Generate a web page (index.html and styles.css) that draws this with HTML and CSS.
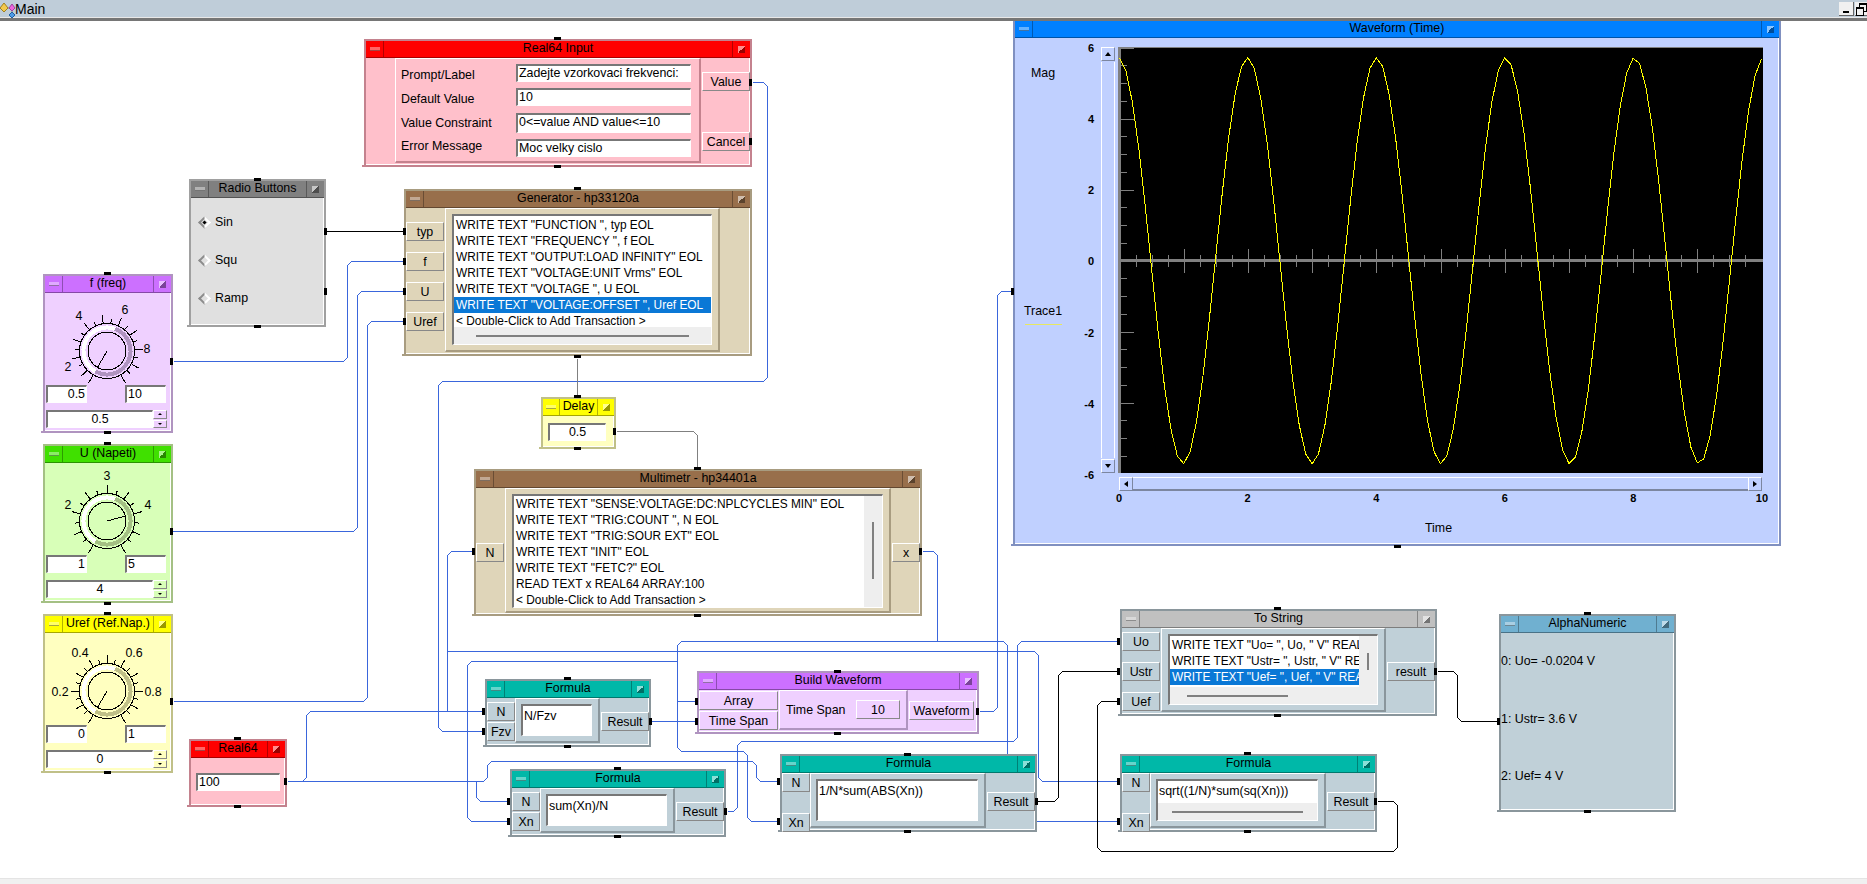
FILE: index.html
```html
<!DOCTYPE html>
<html lang="en">
<head>
    <meta charset="UTF-8">
    <meta name="viewport" content="width=device-width, initial-scale=1.0">
    <title>Main</title>
    <link rel="stylesheet" href="styles.css">
</head>
<body>
    <header class="main-bar">
        <svg class="main-icon" width="16" height="18" viewBox="0 0 16 18">
            <path d="M4 7 L12 7 L12 14" class="main-icon-line"/>
            <polygon points="4,2 8,7 4,11 0,7" fill="#f2c94c" stroke="#a08020"/>
            <polygon points="12,3 15,7 12,10 9,7" fill="#ee66dd" stroke="#a040a0"/>
            <polygon points="12,11 15,14 12,17 9,14" fill="#4d9be8" stroke="#2060a0"/>
        </svg>
        <span class="main-name">Main</span>
        <div class="win-controls">
            <span class="win-btn win-min"></span>
            <span class="win-btn win-restore"></span>
        </div>
    </header>

    <main class="canvas">
        <svg id="wires" class="layer" viewBox="0 21 1867 857"></svg>

        <!-- Real64 Input -->
        <div class="node red n-input">
            <div class="title"><span class="tb tb-min"></span><span class="title-text">Real64 Input</span><span class="tb tb-max"></span></div>
            <div class="body">
                <div class="inputs"></div>
                <div class="inner form">
                    <span class="lab-low">Prompt/Label</span><span class="field">Zadejte vzorkovaci frekvenci:</span>
                    <span class="lab-low">Default Value</span><span class="field">10</span>
                    <span class="lab-mid">Value Constraint</span><span class="field">0&lt;=value AND value&lt;=10</span>
                    <span class="lab-high">Error Message</span><span class="field">Moc velky cislo</span>
                </div>
                <div class="outputs">
                    <span class="term">Value</span>
                    <span class="term">Cancel</span>
                </div>
            </div>
        </div>

        <!-- Radio Buttons -->
        <div class="node gray n-radio">
            <div class="title"><span class="tb tb-min"></span><span class="title-text">Radio Buttons</span><span class="tb tb-max"></span></div>
            <div class="body radio-list">
                <div class="radio-row"><span class="radio radio-on"></span>Sin</div>
                <div class="radio-row"><span class="radio"></span>Squ</div>
                <div class="radio-row"><span class="radio"></span>Ramp</div>
            </div>
        </div>

        <!-- Generator -->
        <div class="node brown n-generator">
            <div class="title"><span class="tb tb-min"></span><span class="title-text">Generator - hp33120a</span><span class="tb tb-max"></span></div>
            <div class="body">
                <div class="inputs">
                    <span class="term">typ</span>
                    <span class="term">f</span>
                    <span class="term">U</span>
                    <span class="term">Uref</span>
                </div>
                <div class="inner">
                    <div class="list">
                        <div class="list-main">
                            <div class="rows">
                                <div class="row">WRITE TEXT "FUNCTION ", typ EOL</div>
                                <div class="row">WRITE TEXT "FREQUENCY ", f EOL</div>
                                <div class="row">WRITE TEXT "OUTPUT:LOAD INFINITY" EOL</div>
                                <div class="row">WRITE TEXT "VOLTAGE:UNIT Vrms" EOL</div>
                                <div class="row">WRITE TEXT "VOLTAGE ", U EOL</div>
                                <div class="row selected">WRITE TEXT "VOLTAGE:OFFSET ", Uref EOL</div>
                                <div class="row">&lt; Double-Click to Add Transaction &gt;</div>
                            </div>
                        </div>
                        <div class="hscroll"><span class="hthumb"></span></div>
                    </div>
                </div>
                <div class="outputs"></div>
            </div>
        </div>

        <!-- Knobs -->
        <div class="node purple n-knob n-freq">
            <div class="title"><span class="tb tb-min"></span><span class="title-text">f (freq)</span><span class="tb tb-max"></span></div>
            <div class="body knob-body">
                <svg class="knob" viewBox="0 0 124 90" data-lo="0.5" data-hi="10" data-val="0.5" data-major="2" data-mid="1">
                    <text x="34" y="23">4</text>
                    <text x="80" y="17">6</text>
                    <text x="102" y="56">8</text>
                    <text x="23" y="74">2</text>
                </svg>
                <div class="knob-range"><span class="field num-right">0.5</span><span class="field">10</span></div>
                <div class="knob-value"><span class="field num-center">0.5</span><span class="spin"><i class="spin-up"></i><i class="spin-down"></i></span></div>
            </div>
        </div>

        <div class="node green n-knob n-napeti">
            <div class="title"><span class="tb tb-min"></span><span class="title-text">U (Napeti)</span><span class="tb tb-max"></span></div>
            <div class="body knob-body">
                <svg class="knob" viewBox="0 0 124 90" data-lo="1" data-hi="5" data-val="4" data-major="1" data-mid="0.5">
                    <text x="62" y="13">3</text>
                    <text x="23" y="42">2</text>
                    <text x="103" y="42">4</text>
                </svg>
                <div class="knob-range"><span class="field num-right">1</span><span class="field">5</span></div>
                <div class="knob-value"><span class="field num-center">4</span><span class="spin"><i class="spin-up"></i><i class="spin-down"></i></span></div>
            </div>
        </div>

        <div class="node yellow n-knob n-uref">
            <div class="title"><span class="tb tb-min"></span><span class="title-text">Uref (Ref.Nap.)</span><span class="tb tb-max"></span></div>
            <div class="body knob-body">
                <svg class="knob" viewBox="0 0 124 90" data-lo="0" data-hi="1" data-val="0" data-major="0.2" data-mid="0.1">
                    <text x="35" y="20">0.4</text>
                    <text x="89" y="20">0.6</text>
                    <text x="15" y="59">0.2</text>
                    <text x="108" y="59">0.8</text>
                </svg>
                <div class="knob-range"><span class="field num-right">0</span><span class="field">1</span></div>
                <div class="knob-value"><span class="field num-center">0</span><span class="spin"><i class="spin-up"></i><i class="spin-down"></i></span></div>
            </div>
        </div>

        <!-- Real64 constant -->
        <div class="node red n-real64">
            <div class="title"><span class="tb tb-min"></span><span class="title-text">Real64</span><span class="tb tb-max"></span></div>
            <div class="body const-body"><span class="field">100</span></div>
        </div>

        <!-- Delay -->
        <div class="node yellow n-delay">
            <div class="title"><span class="tb tb-min"></span><span class="title-text">Delay</span><span class="tb tb-max"></span></div>
            <div class="body const-body"><span class="field num-center">0.5</span></div>
        </div>

        <!-- Multimetr -->
        <div class="node brown n-multimetr">
            <div class="title"><span class="tb tb-min"></span><span class="title-text">Multimetr - hp34401a</span><span class="tb tb-max"></span></div>
            <div class="body">
                <div class="inputs"><span class="term">N</span></div>
                <div class="inner">
                    <div class="list">
                        <div class="list-main">
                            <div class="rows">
                                <div class="row">WRITE TEXT "SENSE:VOLTAGE:DC:NPLCYCLES MIN" EOL</div>
                                <div class="row">WRITE TEXT "TRIG:COUNT ", N EOL</div>
                                <div class="row">WRITE TEXT "TRIG:SOUR EXT" EOL</div>
                                <div class="row">WRITE TEXT "INIT" EOL</div>
                                <div class="row">WRITE TEXT "FETC?" EOL</div>
                                <div class="row">READ TEXT x REAL64 ARRAY:100</div>
                                <div class="row">&lt; Double-Click to Add Transaction &gt;</div>
                            </div>
                            <div class="vscroll"><span class="vthumb"></span></div>
                        </div>
                    </div>
                </div>
                <div class="outputs"><span class="term">x</span></div>
            </div>
        </div>

        <!-- Formula boxes -->
        <div class="node teal n-formula n-f1">
            <div class="title"><span class="tb tb-min"></span><span class="title-text">Formula</span><span class="tb tb-max"></span></div>
            <div class="body">
                <div class="inputs"><span class="term">N</span><span class="term">Fzv</span></div>
                <div class="inner"><div class="list formula-box">N/Fzv</div></div>
                <div class="outputs"><span class="term">Result</span></div>
            </div>
        </div>

        <div class="node teal n-formula n-f2">
            <div class="title"><span class="tb tb-min"></span><span class="title-text">Formula</span><span class="tb tb-max"></span></div>
            <div class="body">
                <div class="inputs"><span class="term">N</span><span class="term">Xn</span></div>
                <div class="inner"><div class="list formula-box">sum(Xn)/N</div></div>
                <div class="outputs"><span class="term">Result</span></div>
            </div>
        </div>

        <div class="node teal n-formula n-f3">
            <div class="title"><span class="tb tb-min"></span><span class="title-text">Formula</span><span class="tb tb-max"></span></div>
            <div class="body">
                <div class="inputs"><span class="term">N</span><span class="term">Xn</span></div>
                <div class="inner"><div class="list formula-box">1/N*sum(ABS(Xn))</div></div>
                <div class="outputs"><span class="term">Result</span></div>
            </div>
        </div>

        <div class="node teal n-formula n-f4">
            <div class="title"><span class="tb tb-min"></span><span class="title-text">Formula</span><span class="tb tb-max"></span></div>
            <div class="body">
                <div class="inputs"><span class="term">N</span><span class="term">Xn</span></div>
                <div class="inner">
                    <div class="list">
                        <div class="list-main formula-box">sqrt((1/N)*sum(sq(Xn)))</div>
                        <div class="hscroll"><span class="hthumb"></span></div>
                    </div>
                </div>
                <div class="outputs"><span class="term">Result</span></div>
            </div>
        </div>

        <!-- Build Waveform -->
        <div class="node purple n-build">
            <div class="title"><span class="tb tb-min"></span><span class="title-text">Build Waveform</span><span class="tb tb-max"></span></div>
            <div class="body">
                <div class="inputs"><span class="term">Array</span><span class="term">Time Span</span></div>
                <div class="inner span-row"><span>Time Span</span><span class="term">10</span></div>
                <div class="outputs"><span class="term">Waveform</span></div>
            </div>
        </div>

        <!-- To String -->
        <div class="node silver n-tostring">
            <div class="title"><span class="tb tb-min"></span><span class="title-text">To String</span><span class="tb tb-max"></span></div>
            <div class="body">
                <div class="inputs"><span class="term">Uo</span><span class="term">Ustr</span><span class="term">Uef</span></div>
                <div class="inner">
                    <div class="list">
                        <div class="list-main">
                            <div class="rows">
                                <div class="row">WRITE TEXT "Uo= ", Uo, " V" REAL64 FORMAT EOL</div>
                                <div class="row">WRITE TEXT "Ustr= ", Ustr, " V" REAL64 FORMAT EOL</div>
                                <div class="row selected">WRITE TEXT "Uef= ", Uef, " V" REAL64 FORMAT EOL</div>
                                <div class="row">&lt; Double-Click to Add Transaction &gt;</div>
                            </div>
                            <div class="vscroll"><span class="vthumb"></span></div>
                        </div>
                        <div class="hscroll"><span class="hthumb"></span></div>
                    </div>
                </div>
                <div class="outputs"><span class="term">result</span></div>
            </div>
        </div>

        <!-- AlphaNumeric -->
        <div class="node sky n-alpha">
            <div class="title"><span class="tb tb-min"></span><span class="title-text">AlphaNumeric</span><span class="tb tb-max"></span></div>
            <div class="body alpha-body">
                <div>0: Uo= -0.0204 V</div>
                <div>1: Ustr= 3.6 V</div>
                <div>2: Uef= 4 V</div>
            </div>
        </div>

        <!-- Waveform display -->
        <div class="node blue n-wave">
            <div class="title"><span class="tb tb-min"></span><span class="title-text">Waveform (Time)</span><span class="tb tb-max"></span></div>
            <div class="body wave-grid">
                <div class="legend">
                    <span class="legend-mag">Mag</span>
                    <span class="legend-trace">Trace1</span>
                    <span class="legend-line"></span>
                </div>
                <div class="y-labels">
                    <span>6</span><span>4</span><span>2</span><span>0</span><span>-2</span><span>-4</span><span>-6</span>
                </div>
                <div class="vslider">
                    <span class="slide-btn"><i class="arrow-up"></i></span>
                    <span class="vslider-track"></span>
                    <span class="slide-btn"><i class="arrow-down"></i></span>
                </div>
                <svg id="plot" class="plot" viewBox="1118 47 645 426"></svg>
                <div class="hslider">
                    <span class="slide-btn"><i class="arrow-left"></i></span>
                    <span class="hslider-track"></span>
                    <span class="slide-btn"><i class="arrow-right"></i></span>
                </div>
                <div class="x-labels">
                    <span>0</span><span>2</span><span>4</span><span>6</span><span>8</span><span>10</span>
                </div>
                <div class="x-name">Time</div>
            </div>
        </div>

        <svg id="pins" class="layer" viewBox="0 21 1867 857"></svg>
    </main>

    <footer class="status"></footer>

    <script src="script.js"></script>
</body>
</html>
```

FILE: styles.css
```css
/* Global Styles */
* {
    margin: 0;
    padding: 0;
    box-sizing: border-box;
}

body {
    width: 1867px;
    height: 884px;
    display: flex;
    flex-direction: column;
    overflow: hidden;
    background: #fff;
    color: #000;
    font-family: 'Liberation Sans', Arial, sans-serif;
    font-size: 12.4px;
}

/* Window bar */
.main-bar {
    height: 21px;
    flex: none;
    display: flex;
    align-items: flex-start;
    background: #bfcdd9;
    border-bottom: 3px solid #767676;
    box-shadow: inset 0 -1px 0 #e8e8e8;
    position: relative;
    z-index: 2;
}

.main-icon {
    flex: none;
    margin-top: 1px;
}

.main-icon-line {
    fill: none;
    stroke: #888;
}

.main-name {
    font-size: 14px;
    line-height: 18px;
    margin-left: -1px;
}

.win-controls {
    margin-left: auto;
    display: flex;
    gap: 1px;
    padding-top: 2px;
}

.win-btn {
    display: block;
    height: 14px;
    background: #f0f0f0;
    border-right: 1px solid #666;
    border-bottom: 1px solid #666;
    position: relative;
}

.win-min {
    width: 15px;
}

.win-min::after {
    content: '';
    position: absolute;
    left: 4px;
    bottom: 2px;
    width: 6px;
    height: 2px;
    background: #000;
}

.win-restore {
    width: 12px;
    border-right: none;
}

.win-restore::before,
.win-restore::after {
    content: '';
    position: absolute;
    width: 6px;
    height: 6px;
    border: 1px solid #000;
    border-top-width: 2px;
}

.win-restore::before {
    left: 4px;
    top: 1px;
}

.win-restore::after {
    left: 1px;
    top: 5px;
    background: #f0f0f0;
}

/* Canvas */
.canvas {
    flex: 1;
    position: relative;
    overflow: hidden;
}

.layer {
    position: absolute;
    left: 0;
    top: 0;
    width: 1867px;
    height: 857px;
    shape-rendering: crispEdges;
}

#pins {
    pointer-events: none;
}

.status {
    height: 6px;
    flex: none;
    background: #f0f0f0;
    border-top: 1px solid #e4e4e4;
}

/* Wires */
.wire {
    fill: none;
    stroke: #3a66dc;
    stroke-width: 1;
}

.wire-black {
    stroke: #000;
}

.wire-gray {
    stroke: #808080;
}

.pin {
    fill: #000;
}

/* Node colours */
.red    { --title: #ff0000; --fill: #ffc0cb; --edge: #c4828e; }
.gray   { --title: #808080; --fill: #e0e0e0; --edge: #a0a0a0; }
.brown  { --title: #986f4b; --fill: #dfd5b9; --edge: #a89c80; }
.purple { --title: #cc70ff; --fill: #efd0ff; --edge: #b094c0; }
.green  { --title: #40e000; --fill: #d8ffb8; --edge: #a4c084; }
.yellow { --title: #ffff00; --fill: #ffffc0; --edge: #c0c088; }
.teal   { --title: #00b8a8; --fill: #c0d0d8; --edge: #8a969c; }
.silver { --title: #c0c0c0; --fill: #c0d0d8; --edge: #8a969c; }
.sky    { --title: #70b0d0; --fill: #c0d0d8; --edge: #8a969c; }
.blue   { --title: #0080ff; --fill: #c0d0ff; --edge: #8090c0; }

/* Node shell */
.node {
    position: absolute;
    display: flex;
    flex-direction: column;
    background: var(--fill);
    border: 2px solid var(--edge);
    box-shadow: inset -1px -1px 0 #fff;
}

/* the little bevel tail in the lower left corner */
.node::after {
    content: '';
    position: absolute;
    left: -4px;
    bottom: -2px;
    width: 2px;
    height: 2px;
    background: var(--edge);
}

.title {
    height: 17px;
    flex: none;
    display: flex;
    background: var(--title);
    border-bottom: 1px solid rgba(0, 0, 0, 0.35);
}

.title-text {
    flex: 1;
    min-width: 0;
    text-align: center;
    line-height: 15px;
    white-space: nowrap;
    overflow: hidden;
}

.tb {
    flex: none;
    width: 18px;
    display: flex;
    align-items: center;
    justify-content: center;
}

.tb-min {
    border-right: 1px solid rgba(0, 0, 0, 0.3);
}

.tb-max {
    border-left: 1px solid rgba(0, 0, 0, 0.3);
}

.tb-min::before {
    content: '';
    width: 10px;
    height: 3px;
    background: rgba(255, 255, 255, 0.4);
    border-bottom: 1px solid rgba(0, 0, 0, 0.35);
}

.tb-max::before {
    content: '';
    width: 7px;
    height: 7px;
    background: linear-gradient(135deg, rgba(255, 255, 255, 0.55) 50%, rgba(0, 0, 0, 0.4) 50%);
}

.body {
    flex: 1;
    min-height: 0;
    display: flex;
}

.inputs,
.outputs {
    flex: none;
    display: flex;
    flex-direction: column;
}

.outputs {
    padding-left: 1px;
}

.inner {
    flex: 1;
    min-width: 0;
    display: flex;
    flex-direction: column;
    padding: 5px 6px;
    margin-left: 1px;
    margin-bottom: 2px;
    border: 1px solid;
    border-color: #fff var(--edge) var(--edge) #fff;
    border-right-width: 2px;
    border-bottom-width: 2px;
}

.term {
    display: block;
    height: 19px;
    line-height: 18px;
    text-align: center;
    white-space: nowrap;
    background: var(--fill);
    border: 1px solid;
    border-color: #fff #888 #888 #fff;
}

.field {
    display: block;
    height: 18px;
    line-height: 14px;
    padding: 0 1px;
    background: #fff;
    border: 1px solid #fff;
    border-top: 2px solid #777;
    border-left: 2px solid #777;
    white-space: nowrap;
    overflow: hidden;
}

.num-right {
    text-align: right;
}

.num-center {
    text-align: center;
}

/* Transaction lists */
.list {
    flex: 1;
    min-height: 0;
    display: flex;
    flex-direction: column;
    background: #fff;
    border: 1px solid #fff;
    border-top: 2px solid #777;
    border-left: 2px solid #777;
    overflow: hidden;
}

.list-main {
    flex: 1;
    min-height: 0;
    display: flex;
    overflow: hidden;
}

.rows {
    flex: 1;
    min-width: 0;
    overflow: hidden;
    padding-top: 1px;
    font-size: 11.9px;
}

.row {
    height: 16px;
    line-height: 16px;
    padding-left: 2px;
    white-space: nowrap;
    overflow: hidden;
}

.selected {
    background: #0a78d6;
    color: #fff;
}

.hscroll {
    height: 17px;
    flex: none;
    display: flex;
    align-items: center;
    justify-content: center;
    background: #eee;
}

.hthumb {
    display: block;
    width: 83%;
    height: 2px;
    background: #808080;
}

.vscroll {
    flex: none;
    width: 18px;
    display: flex;
    justify-content: center;
    background: #eee;
}

.vthumb {
    display: block;
    width: 2px;
    height: 57px;
    margin-top: 26px;
    background: #808080;
}

.formula-box {
    display: block;
    padding-left: 1px;
    padding-top: 3px;
    line-height: 14px;
    white-space: nowrap;
    overflow: hidden;
}

/* Real64 Input */
.n-input {
    left: 364px;
    top: 18px;
    width: 388px;
    height: 128px;
}

.n-input .inputs {
    width: 28px;
}

.n-input .outputs {
    width: 49px;
    padding-top: 14px;
    gap: 41px;
}

.form {
    display: grid;
    grid-template-columns: 115px 175px;
    grid-template-rows: 18px 18px 20px 18px;
    row-gap: 6.3px;
    padding: 5px 5px;
}

.form .field {
    height: 100%;
}

.lab-low {
    align-self: end;
}

.lab-mid {
    align-self: center;
}

.lab-high {
    align-self: start;
}

/* Radio Buttons */
.n-radio {
    left: 189px;
    top: 158px;
    width: 137px;
    height: 148px;
}

.radio-list {
    flex-direction: column;
    padding: 5px 0 0 8px;
}

.radio-row {
    height: 38px;
    display: flex;
    align-items: center;
    gap: 6px;
}

.radio {
    display: block;
    position: relative;
    width: 9px;
    height: 9px;
    margin-left: 1px;
    transform: rotate(45deg);
    background: var(--fill);
    border: 2px solid;
    border-color: #fff #fff #8c8c8c #8c8c8c;
}

.radio-on::after {
    content: '';
    position: absolute;
    left: 1px;
    top: 1px;
    width: 3px;
    height: 3px;
    background: #000;
}

/* Generator */
.n-generator {
    left: 404px;
    top: 168px;
    width: 348px;
    height: 167px;
}

.n-generator .inputs {
    width: 38px;
    padding-top: 14px;
    gap: 11px;
}

.n-generator .outputs {
    width: 30px;
}

/* Knobs */
.n-knob {
    left: 43px;
    width: 130px;
    height: 159px;
}

.n-freq {
    top: 253px;
}

.n-napeti {
    top: 423px;
}

.n-uref {
    top: 593px;
}

.knob-body {
    flex-direction: column;
}

.knob {
    width: 124px;
    height: 90px;
    flex: none;
    margin-bottom: 2px;
    shape-rendering: crispEdges;
}

.knob text {
    font-size: 12.4px;
    text-anchor: middle;
    dominant-baseline: central;
}

.knob-line {
    stroke: #000;
    fill: none;
}

.knob-plate {
    fill: var(--fill);
    stroke: #000;
}

.knob-arc-light {
    fill: none;
    stroke: #fff;
    stroke-width: 4;
}

.knob-arc-dark {
    fill: none;
    stroke: var(--edge);
    stroke-width: 4;
}

.knob-range {
    display: flex;
    justify-content: space-between;
    padding: 0 5px 0 1px;
}

.knob-range .field {
    width: 41px;
}

.knob-value {
    display: flex;
    padding: 7px 0 0 1px;
}

.knob-value .field {
    width: 107px;
}

.spin {
    width: 14px;
    display: flex;
    flex-direction: column;
    gap: 1px;
}

.spin i {
    display: flex;
    flex: 1;
    align-items: center;
    justify-content: center;
    background: var(--fill);
    border: 1px solid;
    border-color: #fff #888 #888 #fff;
}

.spin-up::before,
.spin-down::before {
    content: '';
    border-left: 2px solid transparent;
    border-right: 2px solid transparent;
}

.spin-up::before {
    border-bottom: 2px solid #000;
}

.spin-down::before {
    border-top: 2px solid #000;
}

/* Constants */
.const-body {
    padding: 0 5px;
    flex-direction: column;
}

.n-real64 {
    left: 189px;
    top: 718px;
    width: 98px;
    height: 68px;
}

.n-real64 .const-body {
    padding-top: 15px;
}

.n-delay {
    left: 541px;
    top: 376px;
    width: 75px;
    height: 52px;
}

.n-delay .const-body {
    padding-top: 7px;
    padding-right: 8px;
}

.n-delay .tb {
    width: 17px;
}

/* Multimetr */
.n-multimetr {
    left: 474px;
    top: 448px;
    width: 448px;
    height: 147px;
}

.n-multimetr .inputs {
    width: 28px;
    padding-top: 55px;
}

.n-multimetr .outputs {
    width: 29px;
    padding-top: 55px;
}

.n-multimetr .inner {
    padding-bottom: 3px;
    margin-bottom: 1px;
}

.n-multimetr .rows {
    padding-top: 0;
}

/* Formula boxes */
.n-formula .inputs {
    width: 28px;
    padding-top: 4px;
    gap: 1px;
}

.n-formula .inner {
    margin-left: 0;
    padding-left: 5px;
}

.n-formula .outputs {
    width: 49px;
    padding-top: 14px;
}

.n-f1 {
    left: 485px;
    top: 658px;
    width: 166px;
    height: 68px;
}

.n-f2 {
    left: 510px;
    top: 748px;
    width: 216px;
    height: 68px;
}

.n-f3 {
    left: 780px;
    top: 733px;
    width: 257px;
    height: 78px;
}

.n-f4 {
    left: 1120px;
    top: 733px;
    width: 257px;
    height: 78px;
}

.n-f3 .inputs,
.n-f4 .inputs {
    padding-top: 0;
    gap: 21px;
}

.n-f3 .outputs,
.n-f4 .outputs {
    padding-top: 19px;
}

/* Build Waveform */
.n-build {
    left: 697px;
    top: 650px;
    width: 282px;
    height: 63px;
}

.n-build .inputs {
    width: 79px;
    padding-top: 1px;
    gap: 1px;
}

.n-build .outputs {
    width: 69px;
    padding: 11px 3px 0 1px;
}

.span-row {
    flex-direction: row;
    align-items: center;
    justify-content: space-between;
    padding: 0 6px;
}

.span-row .term {
    width: 44px;
}

/* To String */
.n-tostring {
    left: 1120px;
    top: 588px;
    width: 317px;
    height: 107px;
}

.n-tostring .inputs {
    width: 38px;
    padding-top: 4px;
    gap: 11px;
}

.n-tostring .outputs {
    width: 49px;
    padding-top: 34px;
}

.n-tostring .hscroll {
    justify-content: flex-start;
    padding-left: 17px;
}

.n-tostring .hthumb {
    width: 101px;
}

.n-tostring .vthumb {
    height: 17px;
    margin-top: 17px;
}

/* AlphaNumeric */
.n-alpha {
    left: 1499px;
    top: 593px;
    width: 177px;
    height: 198px;
}

.alpha-body {
    flex-direction: column;
}

.alpha-body div {
    height: 57.5px;
    line-height: 57.5px;
    white-space: nowrap;
}

/* Waveform display */
.n-wave {
    left: 1013px;
    top: -2px;
    width: 768px;
    height: 527px;
}

.wave-grid {
    display: grid;
    grid-template-columns: 56px 23px 7px 14px 3px 645px;
    grid-template-rows: 426px 13px 16px 1fr;
    padding-top: 9px;
}

.legend {
    grid-column: 1;
    grid-row: 1;
    display: flex;
    flex-direction: column;
    align-items: center;
}

.legend-mag {
    margin-top: 19px;
}

.legend-trace {
    margin-top: 224px;
}

.legend-line {
    display: block;
    width: 37px;
    height: 1px;
    margin-top: 6px;
    background: #e8e860;
}

.y-labels {
    grid-column: 2;
    grid-row: 1;
    margin: -6px 0 -9px;
    display: flex;
    flex-direction: column;
    justify-content: space-between;
    text-align: right;
    font-size: 11px;
    font-weight: bold;
    line-height: 14px;
}

.vslider {
    grid-column: 4;
    grid-row: 1;
    display: flex;
    flex-direction: column;
}

.vslider-track {
    flex: 1;
    border-left: 1px solid #fff;
    border-right: 1px solid #fff;
    margin: 1px 0;
}

.slide-btn {
    display: flex;
    flex: none;
    width: 14px;
    height: 14px;
    align-items: center;
    justify-content: center;
    background: var(--fill);
    border: 1px solid;
    border-color: #fff #7c86a0 #7c86a0 #fff;
}

.arrow-up,
.arrow-down {
    border-left: 3px solid transparent;
    border-right: 3px solid transparent;
}

.arrow-up {
    border-bottom: 4px solid #000;
}

.arrow-down {
    border-top: 4px solid #000;
}

.arrow-left,
.arrow-right {
    border-top: 3px solid transparent;
    border-bottom: 3px solid transparent;
}

.arrow-left {
    border-right: 4px solid #000;
}

.arrow-right {
    border-left: 4px solid #000;
}

.plot {
    grid-column: 6;
    grid-row: 1;
    display: block;
    width: 645px;
    height: 426px;
    background: #000;
    shape-rendering: crispEdges;
}

.plot-axis {
    stroke: #808080;
    fill: none;
}

.plot-trace {
    stroke: #ffff00;
    fill: none;
}

.hslider {
    grid-column: 6;
    grid-row: 2;
    display: flex;
    margin-top: 4px;
    margin-left: 1px;
    margin-right: 1px;
    height: 14px;
}

.hslider-track {
    flex: 1;
    border-top: 1px solid #fff;
    border-bottom: 2px solid #7c86a0;
}

.x-labels {
    grid-column: 6;
    grid-row: 3;
    margin: 5px 1px 0;
    display: flex;
    justify-content: space-between;
    font-size: 11px;
    font-weight: bold;
    line-height: 14px;
}

.x-labels span {
    width: 0;
    display: flex;
    justify-content: center;
}

.x-name {
    grid-column: 1 / -1;
    grid-row: 4;
    margin-top: 19px;
    padding-left: 410px;
    text-align: left;
}
```

FILE: script.js
```js
const SVG_NS = 'http://www.w3.org/2000/svg';

function addShape(parent, tag, attrs) {
    const el = document.createElementNS(SVG_NS, tag);
    for (const key in attrs) {
        el.setAttribute(key, attrs[key]);
    }
    parent.appendChild(el);
    return el;
}

// Wires: lists of corner points in page coordinates
const wires = [
    { kind: 'black', pts: [[326, 231], [404, 231]] },
    { pts: [[173, 361], [347, 361], [347, 261], [404, 261]] },
    { pts: [[171, 531], [357, 531], [357, 291], [404, 291]] },
    { pts: [[173, 701], [367, 701], [367, 321], [404, 321]] },
    { pts: [[752, 82], [767, 82], [767, 381], [438, 381], [438, 731], [485, 731]] },
    { kind: 'gray', pts: [[577, 358], [577, 395]] },
    { kind: 'gray', pts: [[616, 431], [697, 431], [697, 468]] },

    // N from the Real64 constant
    { pts: [[287, 781], [306, 781], [306, 711], [485, 711]] },
    { pts: [[447, 711], [447, 551], [475, 551]] },
    { pts: [[447, 651], [1038, 651], [1038, 781], [1120, 781]] },
    { pts: [[287, 781], [487, 781], [487, 761], [756, 761], [756, 781], [780, 781]] },
    { pts: [[476, 781], [476, 801], [510, 801]] },

    // x from the Multimetr
    { pts: [[922, 551], [937, 551], [937, 641]] },
    { pts: [[1007, 821], [1007, 641], [677, 641], [677, 751], [747, 751], [747, 821], [780, 821]] },
    { pts: [[1007, 821], [1120, 821]] },
    { pts: [[677, 701], [697, 701]] },
    { pts: [[677, 661], [467, 661], [467, 821], [510, 821]] },

    { pts: [[651, 721], [697, 721]] },
    { pts: [[979, 711], [997, 711], [997, 291], [1013, 291]] },
    { pts: [[727, 811], [737, 811], [737, 741], [1017, 741], [1017, 641], [1120, 641]] },

    { kind: 'black', pts: [[1037, 801], [1058, 801], [1058, 671], [1120, 671]] },
    { kind: 'black', pts: [[1377, 801], [1397, 801], [1397, 851], [1097, 851], [1097, 701], [1120, 701]] },
    { kind: 'black', pts: [[1437, 671], [1457, 671], [1457, 721], [1499, 721]] }
];

// Turn the corner points into a path with small rounded corners
function wirePath(pts) {
    const r = 4;
    let d = `M${pts[0][0] + 0.5} ${pts[0][1] + 0.5}`;
    for (let i = 1; i < pts.length; i++) {
        const [x, y] = pts[i];
        if (i === pts.length - 1) {
            d += ` L${x + 0.5} ${y + 0.5}`;
            break;
        }
        const [px, py] = pts[i - 1];
        const [nx, ny] = pts[i + 1];
        const inX = Math.sign(x - px) * r;
        const inY = Math.sign(y - py) * r;
        const outX = Math.sign(nx - x) * r;
        const outY = Math.sign(ny - y) * r;
        d += ` L${x - inX + 0.5} ${y - inY + 0.5} L${x + outX + 0.5} ${y + outY + 0.5}`;
    }
    return d;
}

const wireLayer = document.getElementById('wires');
wires.forEach(wire => {
    const cls = wire.kind ? `wire wire-${wire.kind}` : 'wire';
    addShape(wireLayer, 'path', { class: cls, d: wirePath(wire.pts) });
});

// Pins on the left and right sides: [x, y centre]
const sidePins = [
    [749, 82], [749, 141], [324, 231], [324, 291],
    [403, 231], [403, 261], [403, 291], [403, 321],
    [170, 361], [170, 531], [170, 701], [284, 781], [613, 431],
    [472, 551], [919, 551],
    [482, 711], [482, 731], [649, 721],
    [695, 701], [695, 721], [976, 711],
    [507, 801], [507, 821], [724, 811],
    [777, 781], [777, 821], [1035, 801],
    [1117, 641], [1117, 671], [1117, 701], [1434, 671],
    [1117, 781], [1117, 821], [1374, 801],
    [1497, 721], [1011, 291]
];

// Pins on the top and bottom edges: [x centre, y]
const edgePins = [
    [557, 37], [557, 165], [257, 178], [257, 325], [577, 187], [577, 355],
    [107, 272], [107, 431], [107, 442], [107, 602], [107, 612], [107, 771],
    [237, 737], [237, 805], [577, 395], [577, 447], [697, 467], [697, 614],
    [567, 677], [567, 745], [837, 670], [837, 732], [617, 767], [617, 835],
    [907, 753], [907, 830], [1277, 607], [1277, 714], [1247, 752], [1247, 830],
    [1587, 612], [1587, 810], [1397, 545]
];

const pinLayer = document.getElementById('pins');
sidePins.forEach(([x, y]) => {
    addShape(pinLayer, 'rect', { class: 'pin', x: x, y: y - 3, width: 3, height: 7 });
});
edgePins.forEach(([x, y]) => {
    addShape(pinLayer, 'rect', { class: 'pin', x: x - 3, y: y, width: 7, height: 3 });
});

// Knobs
function polar(cx, cy, r, deg) {
    const rad = deg * Math.PI / 180;
    return [cx + r * Math.sin(rad), cy - r * Math.cos(rad)];
}

function arcPath(cx, cy, r, from, to) {
    const [x1, y1] = polar(cx, cy, r, from);
    const [x2, y2] = polar(cx, cy, r, to);
    const large = to - from > 180 ? 1 : 0;
    return `M${x1} ${y1} A${r} ${r} 0 ${large} 1 ${x2} ${y2}`;
}

function isMultiple(value, of) {
    const ratio = value / of;
    return Math.abs(ratio - Math.round(ratio)) < 1e-6;
}

document.querySelectorAll('.knob').forEach(svg => {
    const lo = Number(svg.dataset.lo);
    const hi = Number(svg.dataset.hi);
    const val = Number(svg.dataset.val);
    const major = Number(svg.dataset.major);
    const mid = Number(svg.dataset.mid);
    const cx = 62;
    const cy = 58;
    const toAngle = v => -150 + 300 * (v - lo) / (hi - lo);

    addShape(svg, 'circle', { class: 'knob-plate', cx: cx, cy: cy, r: 27.5 });
    addShape(svg, 'path', { class: 'knob-arc-light', d: arcPath(cx, cy, 23.5, -150, 20) });
    addShape(svg, 'path', { class: 'knob-arc-dark', d: arcPath(cx, cy, 23.5, 20, 210) });
    addShape(svg, 'circle', { class: 'knob-line', cx: cx, cy: cy, r: 19 });

    const step = mid / 2;
    const count = Math.round((hi - lo) / step);
    for (let i = 0; i <= count; i++) {
        const v = lo + i * step;
        let len = 4;
        if (i === 0 || i === count) {
            len = 11;
        } else if (isMultiple(v, major) || isMultiple(v, mid)) {
            len = 8;
        }
        const [x1, y1] = polar(cx, cy, 28, toAngle(v));
        const [x2, y2] = polar(cx, cy, 28 + len, toAngle(v));
        addShape(svg, 'line', { class: 'knob-line', x1: x1, y1: y1, x2: x2, y2: y2 });
    }

    const [nx, ny] = polar(cx, cy, 20, toAngle(val));
    addShape(svg, 'line', { class: 'knob-line', x1: cx, y1: cy, x2: nx, y2: ny });
});

// Waveform plot
const plot = document.getElementById('plot');
const plotX = t => 1119.5 + 64.2 * t;
const plotY = v => 260.7 - 35.5 * v;

// zero line and left edge
addShape(plot, 'rect', { x: 1118, y: 47, width: 645, height: 1, fill: '#808080' });
addShape(plot, 'rect', { x: 1118, y: 47, width: 3, height: 426, fill: '#808080' });
addShape(plot, 'rect', { x: 1118, y: 259, width: 645, height: 3, fill: '#808080' });

for (let v = -6; v <= 6; v += 0.5) {
    const y = Math.round(plotY(v)) + 0.5;
    const len = isMultiple(v, 2) ? 14 : 7;
    addShape(plot, 'line', { class: 'plot-axis', x1: 1120, y1: y, x2: 1120 + len, y2: y });
}

for (let t = 0.25; t < 10; t += 0.25) {
    const x = Math.round(plotX(t)) + 0.5;
    const half = isMultiple(t, 1) ? 12 : 6;
    addShape(plot, 'line', { class: 'plot-axis', x1: x, y1: 261 - half, x2: x, y2: 261 + half });
}

// 100 samples of the measured sine, joined by straight lines
const points = [];
for (let k = 0; k <= 100; k++) {
    const t = k / 10;
    const v = 5.72 * Math.cos(Math.PI * (t + 0.015) / 1.005);
    points.push(`${plotX(t).toFixed(1)},${plotY(v).toFixed(1)}`);
}
addShape(plot, 'polyline', { class: 'plot-trace', points: points.join(' ') });
```
